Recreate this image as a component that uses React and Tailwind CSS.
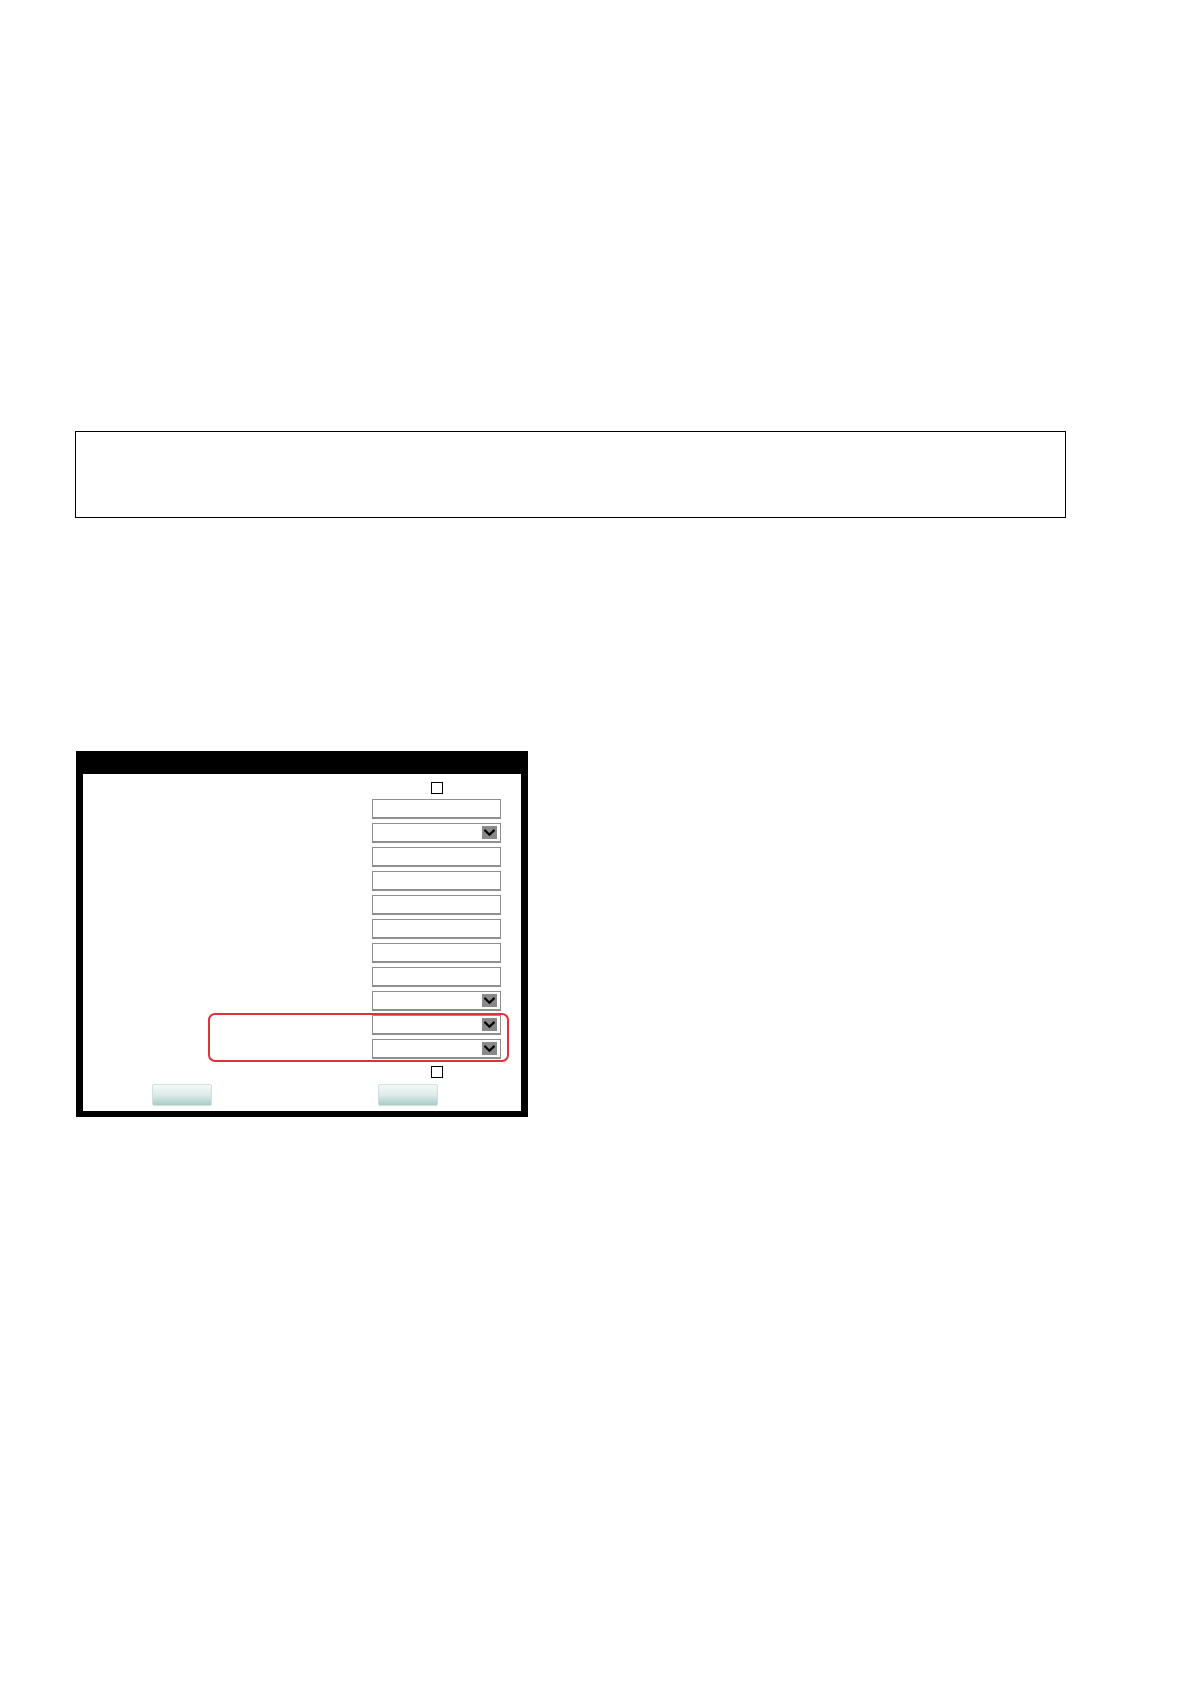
import React from 'react';

function TextBox() {
    return <div className="h-[20px] w-[129px] border-[1.5px] border-[#8f8f8f] border-b-2 bg-white" />;
}

function SelectBox() {
    return (
        <div className="h-[20px] w-[129px] border-[1.5px] border-[#8f8f8f] border-b-2 bg-white flex items-center justify-end pr-[3px]">
            <div className="w-[15px] h-[13px] bg-[#8a8a8a] flex items-center justify-center">
                <svg width="11" height="8" viewBox="0 0 11 8">
                    <path d="M1.2 1.6 L5.5 5.8 L9.8 1.6" fill="none" stroke="#000" strokeWidth="2.1" strokeLinecap="square" />
                </svg>
            </div>
        </div>
    );
}

function CheckBox() {
    return <div className="w-[12px] h-[12px] border-[1.5px] border-black bg-white" />;
}

function Button() {
    return (
        <div className="w-[60px] h-[22px] rounded-[2px] border border-[#d3dedd] bg-gradient-to-b from-[#f4f9f8] via-[#dcebe8] to-[#a9cdc7]" />
    );
}

const rows = ['text', 'select', 'text', 'text', 'text', 'text', 'text', 'text', 'select', 'select', 'select'];

export default function App() {
    return (
        <div className="min-h-[1684px] bg-white pt-[431px] pl-[75px] font-['Liberation_Sans',sans-serif]">
            <div className="w-[991px] h-[87px] border-[1.5px] border-black bg-white" />

            <div className="mt-[233px] ml-[1px] w-[452px] h-[366px] bg-black flex flex-col">
                <div className="h-[23px]" />
                <div className="relative flex-1 mx-[7px] mb-[6px] bg-white">
                    <div className="flex flex-col">
                        <div className="pt-[8px] pl-[289px]">
                            <div className="w-[129px] flex justify-center">
                                <CheckBox />
                            </div>
                        </div>
                        <div className="mt-[5px] pl-[289px] flex flex-col gap-[4px]">
                            {rows.map((r, i) =>
                                r === 'select' ? <SelectBox key={i} /> : <TextBox key={i} />
                            )}
                        </div>
                        <div className="mt-[7px] pl-[289px]">
                            <div className="w-[129px] flex justify-center">
                                <CheckBox />
                            </div>
                        </div>
                        <div className="mt-[6px] pl-[69px] flex">
                            <Button />
                            <div className="ml-[166px]">
                                <Button />
                            </div>
                        </div>
                    </div>

                    {/* highlight round the last two selects */}
                    <div className="absolute left-[125px] top-[239px] w-[301px] h-[49px] rounded-[7px] border-2 border-[#e0303a]" />
                </div>
            </div>
        </div>
    );
}
